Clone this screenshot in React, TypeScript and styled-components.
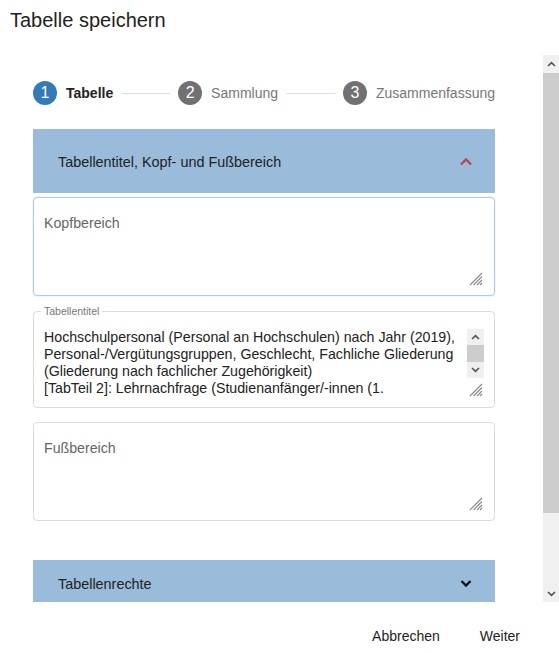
import React from "react";
import styled, { createGlobalStyle } from "styled-components";

const GlobalStyle = createGlobalStyle`
  html, body {
    margin: 0;
    padding: 0;
    background: #fff;
    font-family: "Liberation Sans", Arial, sans-serif;
    color: #222;
  }
  * {
    box-sizing: border-box;
  }
`;

const Dialog = styled.div`
  width: 559px;
  height: 653px;
  display: flex;
  flex-direction: column;
`;

const Title = styled.h2`
  margin: 0;
  height: 55px;
  padding: 8px 10px 0;
  font-size: 20px;
  font-weight: normal;
  line-height: 24px;
  color: #222;
`;

const ScrollArea = styled.div`
  height: 547px;
  display: flex;
  overflow: hidden;
`;

const Content = styled.div`
  flex: 1;
  min-width: 0;
  padding: 26px 48px 80px 33px;
`;

/* drawn scrollbar: the page is photographed with native bars hidden */
const ScrollBar = styled.div<{ $small?: boolean }>`
  flex: none;
  width: ${(p) => (p.$small ? "17px" : "16px")};
  display: flex;
  flex-direction: column;
  background: #f0f0f0;
`;

const ScrollButton = styled.div<{ $h: number }>`
  flex: none;
  height: ${(p) => p.$h}px;
  display: flex;
  align-items: center;
  justify-content: center;
`;

const Thumb = styled.div<{ $h: number }>`
  flex: none;
  height: ${(p) => p.$h}px;
  background: #cdcdcd;
`;

const Spacer = styled.div`
  flex: 1;
`;

const Stepper = styled.div`
  display: flex;
  align-items: center;
  height: 24px;
`;

const Circle = styled.span<{ $active?: boolean }>`
  flex: none;
  width: 24px;
  height: 24px;
  border-radius: 50%;
  background: ${(p) => (p.$active ? "#337ab7" : "#717171")};
  color: #fff;
  font-size: 16px;
  line-height: 24px;
  text-align: center;
`;

const StepLabel = styled.span<{ $active?: boolean }>`
  margin-left: 9px;
  font-size: 14px;
  font-weight: ${(p) => (p.$active ? "bold" : "normal")};
  color: ${(p) => (p.$active ? "#222" : "#777")};
  white-space: nowrap;
`;

const StepLine = styled.span`
  flex: 1;
  height: 1px;
  background: #ddd;
  margin: 0 8px 0 9px;
`;

const AccordionHeader = styled.div<{ $open?: boolean }>`
  display: flex;
  align-items: center;
  justify-content: space-between;
  height: ${(p) => (p.$open ? "64px" : "46px")};
  margin-top: ${(p) => (p.$open ? "24px" : "39px")};
  padding: 1px 22px 0 25px;
  background: #9abbda;
  font-size: 14.4px;
  color: #222;
`;

const FieldBox = styled.div<{ $focus?: boolean }>`
  margin-top: ${(p) => (p.$focus ? "4px" : "14px")};
  padding: 17px 10px 9px 10px;
  border: 1px solid ${(p) => (p.$focus ? "#b3c9e1" : "#dcdcdc")};
  border-radius: 4px;
  box-shadow: ${(p) => (p.$focus ? "0 0 2px rgba(120,160,210,0.35)" : "none")};
`;

const AreaWrap = styled.div`
  position: relative;
`;

const Area = styled.textarea<{ $scroll?: boolean }>`
  display: block;
  width: 100%;
  height: ${(p) => (p.$scroll ? "68px" : "71px")};
  margin: 0;
  padding: 0 ${(p) => (p.$scroll ? "19px" : "0")} 0 0;
  border: none;
  outline: none;
  resize: none;
  overflow: hidden;
  font-family: "Liberation Sans", Arial, sans-serif;
  font-size: 14.2px;
  line-height: 17px;
  color: #222;
  background: transparent;

  &::placeholder {
    color: #666;
  }
`;

const InnerBar = styled.div`
  position: absolute;
  top: 0;
  right: 0;
  height: 49px;
`;

const Grip = styled.svg`
  position: absolute;
  right: 1px;
  bottom: 0;
`;

const Fieldset = styled.fieldset`
  margin: 9px 0 0;
  padding: 12px 10px 10px 10px;
  border: 1px solid #dcdcdc;
  border-radius: 4px;
  min-width: 0;
`;

const Legend = styled.legend`
  margin-left: -3px;
  padding: 0 3px;
  font-size: 10.5px;
  color: #777;
`;

const Footer = styled.div`
  display: flex;
  justify-content: flex-end;
  padding: 25px 19px 0 0;
`;

const FlatButton = styled.button`
  border: none;
  background: transparent;
  padding: 0 20px;
  font-family: "Liberation Sans", Arial, sans-serif;
  font-size: 14px;
  line-height: 18px;
  color: #222;
  cursor: pointer;
`;

const Chevron = ({ up, color }: { up?: boolean; color: string }) => (
  <svg width="14" height="9" viewBox="0 0 14 9">
    <path
      d={up ? "M2 7.5 L7 2.5 L12 7.5" : "M2.5 2 L7 6.5 L11.5 2"}
      fill="none"
      stroke={color}
      strokeWidth="2.3"
    />
  </svg>
);

const Arrow = ({ up }: { up?: boolean }) => (
  <svg width="9" height="6" viewBox="0 0 9 6">
    <path
      d={up ? "M1 5 L4.5 1.6 L8 5" : "M1 1 L4.5 4.4 L8 1"}
      fill="none"
      stroke="#555"
      strokeWidth="1.7"
    />
  </svg>
);

const ResizeGrip = () => (
  <Grip width="14" height="14" viewBox="0 0 14 14">
    <g stroke="#888" strokeWidth="1.1">
      <line x1="13" y1="1" x2="1" y2="13" />
      <line x1="13" y1="4.5" x2="4.5" y2="13" />
      <line x1="13" y1="8" x2="8" y2="13" />
      <line x1="13" y1="11" x2="11" y2="13" />
    </g>
  </Grip>
);

const tableTitle =
  "Hochschulpersonal (Personal an Hochschulen) nach Jahr (2019), Personal-/Vergütungsgruppen, Geschlecht, Fachliche Gliederung (Gliederung nach fachlicher Zugehörigkeit)\n[TabTeil 2]: Lehrnachfrage (Studienanfänger/-innen (1. Fachsemester) nach Jahr (2019), Geschlecht, Fachliche Gliederung (Gliederung nach fachlicher Zugehörigkeit)";

export default function App() {
  return (
    <Dialog>
      <GlobalStyle />
      <Title>Tabelle speichern</Title>
      <ScrollArea>
        <Content>
          <Stepper>
            <Circle $active>1</Circle>
            <StepLabel $active>Tabelle</StepLabel>
            <StepLine />
            <Circle>2</Circle>
            <StepLabel>Sammlung</StepLabel>
            <StepLine />
            <Circle>3</Circle>
            <StepLabel>Zusammenfassung</StepLabel>
          </Stepper>

          <AccordionHeader $open>
            <span>Tabellentitel, Kopf- und Fußbereich</span>
            <Chevron up color="#b84a4a" />
          </AccordionHeader>

          <FieldBox $focus>
            <AreaWrap>
              <Area placeholder="Kopfbereich" />
              <ResizeGrip />
            </AreaWrap>
          </FieldBox>

          <Fieldset>
            <Legend>Tabellentitel</Legend>
            <AreaWrap>
              <Area $scroll defaultValue={tableTitle} />
              <InnerBar>
                <ScrollBar $small style={{ height: "100%" }}>
                  <ScrollButton $h={16}>
                    <Arrow up />
                  </ScrollButton>
                  <Thumb $h={17} />
                  <ScrollButton $h={16}>
                    <Arrow />
                  </ScrollButton>
                </ScrollBar>
              </InnerBar>
              <ResizeGrip />
            </AreaWrap>
          </Fieldset>

          <FieldBox>
            <AreaWrap>
              <Area placeholder="Fußbereich" />
              <ResizeGrip />
            </AreaWrap>
          </FieldBox>

          <AccordionHeader>
            <span>Tabellenrechte</span>
            <Chevron color="#111" />
          </AccordionHeader>
        </Content>
        <ScrollBar>
          <ScrollButton $h={18}>
            <Arrow up />
          </ScrollButton>
          <Thumb $h={440} />
          <Spacer />
          <ScrollButton $h={17}>
            <Arrow />
          </ScrollButton>
        </ScrollBar>
      </ScrollArea>
      <Footer>
        <FlatButton>Abbrechen</FlatButton>
        <FlatButton>Weiter</FlatButton>
      </Footer>
    </Dialog>
  );
}
